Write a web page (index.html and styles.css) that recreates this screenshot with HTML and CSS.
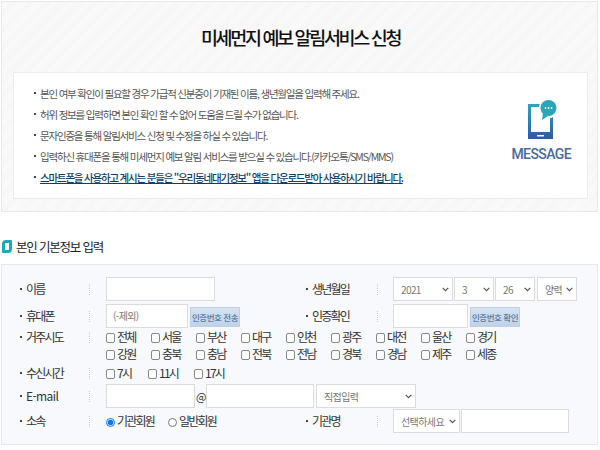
FILE: index.html
```html
<!DOCTYPE html>
<html lang="ko">
<head>
<meta charset="utf-8">
<title>미세먼지 예보 알림서비스 신청</title>
<link rel="stylesheet" href="styles.css">
</head>
<body>
<section class="intro">
  <h1 class="intro-title">미세먼지 예보 알림서비스 신청</h1>
  <div class="notice">
    <ul class="notice-list">
      <li>본인 여부 확인이 필요할 경우 가급적 신분증이 기재된 이름, 생년월일을 입력해 주세요.</li>
      <li>허위 정보를 입력하면 본인 확인 할 수 없어 도움을 드릴 수가 없습니다.</li>
      <li>문자인증을 통해 알림서비스 신청 및 수정을 하실 수 있습니다.</li>
      <li>입력하신 휴대폰을 통해 미세먼지 예보 알림 서비스를 받으실 수 있습니다.(카카오톡/SMS/MMS)</li>
      <li class="strong"><a href="#">스마트폰을 사용하고 계시는 분들은 "우리동네대기정보" 앱을 다운로드받아 사용하시기 바랍니다.</a></li>
    </ul>
    <div class="message">
      <svg class="message-icon" width="30" height="44" viewBox="0 0 30 44">
        <defs><linearGradient id="g" x1="0" y1="0" x2="0" y2="1"><stop offset="0" stop-color="#2ba6bb"/><stop offset="1" stop-color="#2f58a4"/></linearGradient></defs>
        <path fill="url(#g)" d="M0 5h25v35H0z"/>
        <path fill="#fff" d="M3 8h19v25H3z"/>
        <path fill="#fff" d="M9 36h7v1.5H9z"/>
        <circle cx="20" cy="10" r="9.5" fill="#fff"/>
        <circle cx="20.5" cy="9" r="8" fill="#2ba5b9"/>
        <path fill="#2ba5b9" d="M15 14l-1 7 6-4z"/>
        <circle cx="17.5" cy="9" r=".9" fill="#fff"/><circle cx="20.5" cy="9" r=".9" fill="#fff"/><circle cx="23.5" cy="9" r=".9" fill="#fff"/>
      </svg>
      <span class="message-label">MESSAGE</span>
    </div>
  </div>
</section>

<h2 class="section-title"><span class="section-mark"></span>본인 기본정보 입력</h2>

<form class="form">
  <div class="row r1">
    <div class="cell">
      <span class="label">이름</span>
      <div class="fields"><input class="input w-name tall" type="text"></div>
    </div>
    <div class="cell">
      <span class="label">생년월일</span>
      <div class="fields">
        <select class="select w-year tall"><option>2021</option></select>
        <select class="select w-month tall"><option>3</option></select>
        <select class="select w-day tall"><option>26</option></select>
        <select class="select w-cal tall"><option>양력</option></select>
      </div>
    </div>
  </div>
  <div class="row r2">
    <div class="cell">
      <span class="label">휴대폰</span>
      <div class="fields">
        <input class="input w-phone tall ph" type="text" placeholder="(-제외)">
        <button class="btn" type="button">인증번호 전송</button>
      </div>
    </div>
    <div class="cell">
      <span class="label">인증확인</span>
      <div class="fields">
        <input class="input w-auth tall" type="text">
        <button class="btn" type="button">인증번호 확인</button>
      </div>
    </div>
  </div>
  <div class="row r3">
    <div class="cell wide">
      <span class="label">거주시도</span>
      <div class="checks">
        <label class="check"><input type="checkbox">전체</label>
        <label class="check"><input type="checkbox">서울</label>
        <label class="check"><input type="checkbox">부산</label>
        <label class="check"><input type="checkbox">대구</label>
        <label class="check"><input type="checkbox">인천</label>
        <label class="check"><input type="checkbox">광주</label>
        <label class="check"><input type="checkbox">대전</label>
        <label class="check"><input type="checkbox">울산</label>
        <label class="check"><input type="checkbox">경기</label>
        <label class="check"><input type="checkbox">강원</label>
        <label class="check"><input type="checkbox">충북</label>
        <label class="check"><input type="checkbox">충남</label>
        <label class="check"><input type="checkbox">전북</label>
        <label class="check"><input type="checkbox">전남</label>
        <label class="check"><input type="checkbox">경북</label>
        <label class="check"><input type="checkbox">경남</label>
        <label class="check"><input type="checkbox">제주</label>
        <label class="check"><input type="checkbox">세종</label>
      </div>
    </div>
  </div>
  <div class="row r4">
    <div class="cell wide">
      <span class="label">수신시간</span>
      <div class="times">
        <label class="check"><input type="checkbox">7시</label>
        <label class="check"><input type="checkbox">11시</label>
        <label class="check"><input type="checkbox">17시</label>
      </div>
    </div>
  </div>
  <div class="row r5">
    <div class="cell wide">
      <span class="label latin">E-mail</span>
      <div class="fields">
        <input class="input w-mail1 tall" type="text">
        <span class="at">@</span>
        <input class="input w-mail2 tall" type="text">
        <select class="select w-direct tall"><option>직접입력</option></select>
      </div>
    </div>
  </div>
  <div class="row r6">
    <div class="cell">
      <span class="label">소속</span>
      <div class="radios">
        <label class="check radio-a"><input type="radio" name="m" checked>기관회원</label>
        <label class="check"><input type="radio" name="m">일반회원</label>
      </div>
    </div>
    <div class="cell">
      <span class="label">기관명</span>
      <div class="fields">
        <select class="select w-org tall"><option>선택하세요</option></select>
        <input class="input w-orgname tall" type="text">
      </div>
    </div>
  </div>
</form>
</body>
</html>
```
FILE: styles.css
```css
* { box-sizing: border-box; }
html, body { margin: 0; padding: 0; }
body {
  width: 600px;
  height: 450px;
  overflow: hidden;
  background: #fff;
  padding: 1px 2px 0 1px;
  font-family: "Noto Sans CJK KR", "Noto Sans", sans-serif;
  color: #333;
}
.intro {
  height: 211px;
  border: 1px solid #e8e8e8;
  padding: 0 9px 12px 11px;
  background: repeating-linear-gradient(135deg, #fbfbfb 0, #fbfbfb 1px, #f5f5f5 1px, #f5f5f5 2px);
}
.intro-title {
  margin: 0;
  height: 70px;
  display: flex;
  align-items: center;
  justify-content: center;
  font-size: 18.5px;
  font-weight: 500;
  letter-spacing: -2.35px;
  color: #111;
}
.notice {
  height: 127px;
  display: flex;
  justify-content: space-between;
  background: #fff;
  border: 1px solid #ececec;
  padding: 0 16px 0 20px;
}
.notice-list {
  list-style: none;
  margin: 0;
  padding: 10px 0 0 0;
  font-size: 10.5px;
  line-height: 21px;
  letter-spacing: -1.2px;
  color: #555;
  white-space: nowrap;
}
.notice-list li { position: relative; padding-left: 6px; }
.notice-list li::before {
  content: "";
  position: absolute;
  left: -.5px;
  top: 9px;
  width: 2px;
  height: 2px;
  background: #444;
}
.strong a { color: #0e3f66; font-weight: 500; }
.message {
  display: flex;
  flex-direction: column;
  align-items: center;
  padding-top: 26px;
}
.message-icon { margin-left: 4px; }
.message-label {
  font-family: "Roboto", sans-serif;
  font-size: 14px;
  line-height: 16px;
  font-weight: 500;
  letter-spacing: -.6px;
  color: #4a6a9a;
  margin-top: 3px;
}
.section-title {
  margin: 0;
  height: 52px;
  padding-top: 17px;
  display: flex;
  align-items: center;
  font-size: 12.5px;
  font-weight: 400;
  letter-spacing: -1.2px;
  color: #222;
  gap: 4px;
}
.section-mark {
  width: 10px;
  height: 13px;
  margin-left: 1px;
  background: #fff;
  border: 3px solid #1fa9b6;
  border-radius: 4px 1px 4px 1px;
}
.form {
  height: 181px;
  border: 1px solid #e8e8e8;
  background: #f7f9fc;
  padding-top: 11px;
  display: flex;
  flex-direction: column;
  color: #333;
  font-size: 12px;
  letter-spacing: -1.75px;
}
.row { display: grid; grid-template-columns: 303px 1fr; align-items: center; }
.r1 { height: 26px; }
.r2 { height: 27px; }
.r3 { height: 34px; margin-top: -1px; }
.r4 { height: 21px; }
.r5 { height: 26px; }
.r6 { height: 24px; }
.cell { display: flex; align-items: center; }
.r3 .cell { align-items: flex-start; }
.r3 .label { margin-top: 2px; }
.cell.wide { grid-column: 1 / -1; }
.label {
  width: 104px;
  flex: none;
  padding-left: 24px;
  position: relative;
  line-height: 14px;
}
.label.latin { letter-spacing: -.6px; }
.cell + .cell .label { width: 88px; padding-left: 7px; }
.label::before {
  content: "";
  position: absolute;
  left: 18px;
  top: 6px;
  width: 2px;
  height: 2px;
  background: #444;
}
.cell + .cell .label::before { left: 1px; }
.label::after {
  content: "";
  position: absolute;
  left: 87px;
  top: 2px;
  height: 11px;
  border-left: 1px dotted #c9c9c9;
}
.cell + .cell .label::after { left: 72px; }
.fields { display: flex; align-items: center; gap: 2px; }
.input, .select {
  border: 1px solid #dcdcdc;
  background: #fff;
  margin: 0;
  font-family: inherit;
  font-size: 10px;
  letter-spacing: -.6px;
  color: #777;
}
.input { padding: 0 0 0 6px; }
.select {
  appearance: none;
  padding: 0 0 0 7px;
  background: #fff url("data:image/svg+xml,%3Csvg xmlns='http://www.w3.org/2000/svg' width='7' height='5'%3E%3Cpath d='M.7.8 3.5 3.6 6.3.8' fill='none' stroke='%23555' stroke-width='1.2'/%3E%3C/svg%3E") no-repeat right 3px center;
}
.tall { height: 24px; }
.input.ph::placeholder { color: #777; opacity: 1; }
.w-name { width: 109px; }
.w-year { width: 60px; margin-right: -1px; }
.w-month { width: 40px; margin-right: -1px; }
.w-day { width: 40px; }
.w-cal { width: 40px; }
.w-phone { width: 82px; }
.w-auth { width: 75px; }
.w-mail1 { width: 89px; }
.w-mail2 { width: 108px; }
.w-direct { width: 100px; }
.w-org { width: 67px; }
.w-orgname { width: 108px; margin-left: -1px; }
.at { width: 9px; text-align: center; font-size: 11px; margin: 0 -1px; letter-spacing: 0; }
.btn {
  height: 20px;
  width: 50px;
  padding: 0;
  margin-top: 2px;
  border: 1px solid #bcd0e6;
  background: linear-gradient(#d5e3f2, #bed2e9);
  font-family: inherit;
  font-size: 8.5px;
  letter-spacing: -.45px;
  color: #3c5a84;
}
.checks {
  display: grid;
  grid-template-columns: repeat(9, 45px);
  grid-auto-rows: 17px;
}
.check { display: inline-flex; align-items: center; white-space: nowrap; line-height: 14px; }
.check input[type="checkbox"] {
  appearance: none;
  width: 9px;
  height: 10px;
  margin: 2px 2px 0 0;
  background: #fff;
  border: 1px solid #888;
  border-radius: 2px;
}
.check input[type="radio"] { width: 9px; height: 9px; margin: 2px 2px 0 0; }
.times { display: flex; }
.times .check:nth-child(1) { width: 42px; }
.times .check:nth-child(2) { width: 46px; }
.radios { display: flex; }
.radio-a { width: 62px; }
```
